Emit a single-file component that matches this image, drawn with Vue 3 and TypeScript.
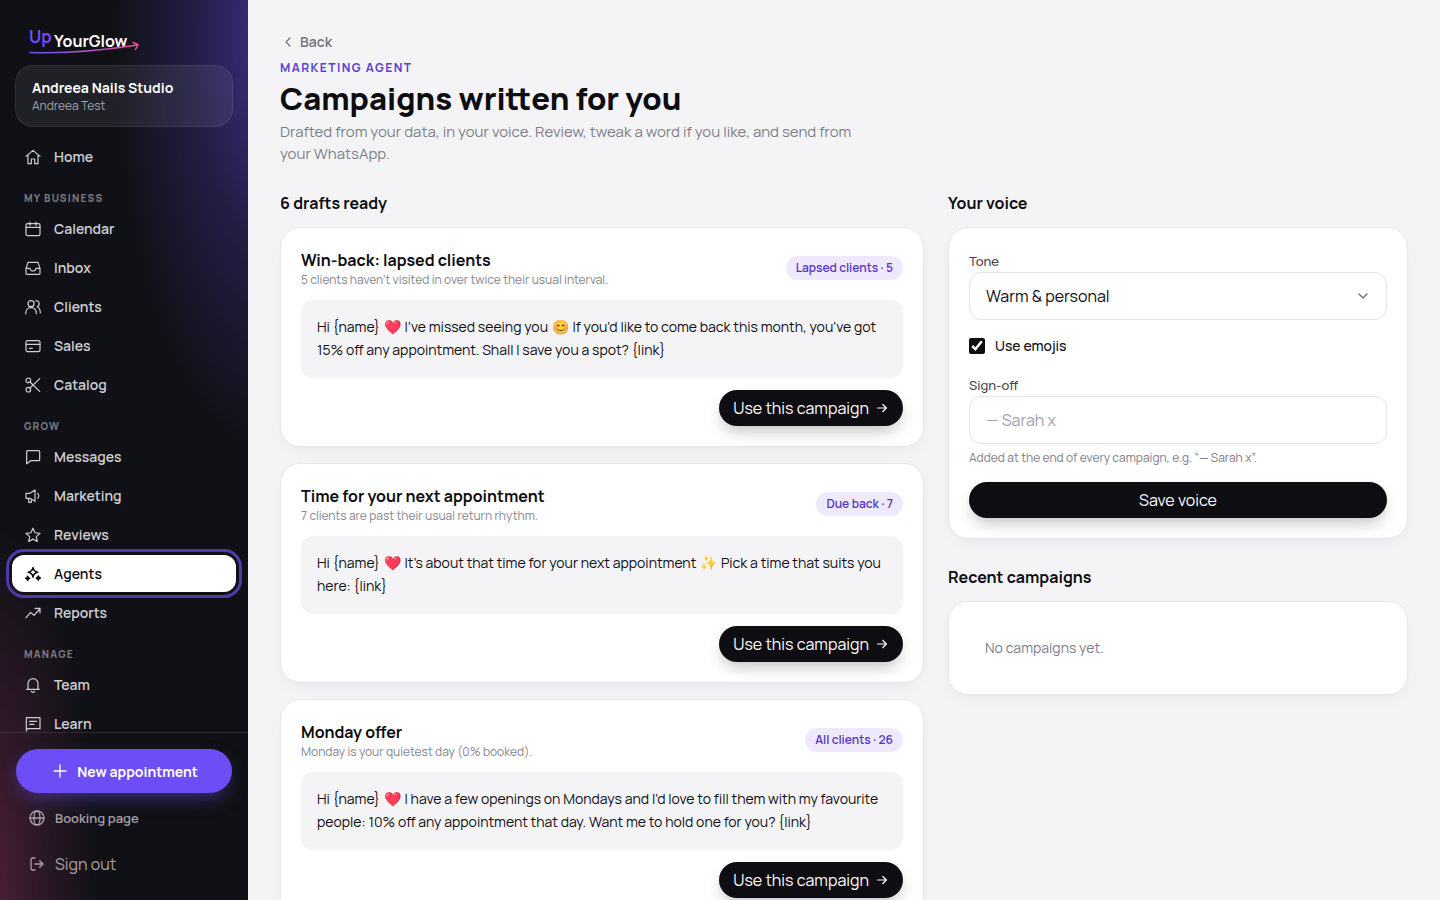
<script setup lang="ts">
import { ref } from 'vue'

interface NavItem {
  label: string
  icon: string
  active?: boolean
}
interface NavGroup {
  title: string
  items: NavItem[]
}
interface Draft {
  title: string
  reason: string
  audience: string
  message: string
}

const icons: Record<string, string> = {
  home: '<path d="M1.500 11 12 2l10.500 9M4.500 9v13h5v-7h5v7h5V9"/>',
  calendar: '<rect x="1.500" y="4" width="21" height="18" rx="2.500"/><path d="M1.500 9.500h21M7.500 1.500V6.500M16.500 1.500V6.500"/>',
  inbox: '<path d="M1.500 12.500 4.500 3.500h15l3 9V20a1.500 1.500 0 0 1-1.500 1.500H3A1.500 1.500 0 0 1 1.500 20zM1.500 12.500h6c.5 2.500 2.200 4 4.500 4s4-1.500 4.500-4h6"/>',
  clients: '<circle cx="9" cy="7" r="4.500"/><path d="M1 22c0-5.500 3-9 8-9s8 3.500 8 9M15.500 3c5.500-2 8 5.500 3 8.500 3 1.500 4.500 5 4.500 9.500"/>',
  sales: '<rect x="1.500" y="4" width="21" height="16.500" rx="2.500"/><path d="M1.500 9.500h21M6.500 15.500h4.500"/>',
  catalog: '<circle cx="5" cy="5" r="3.500"/><circle cx="5" cy="19" r="3.500"/><path d="M7.500 7.500 22 21.500M7.500 16.500 22 2.500"/>',
  messages: '<path d="M4 2.500h16.500A1.500 1.500 0 0 1 22 4v12a1.500 1.500 0 0 1-1.500 1.500H8.500L2.500 22V4A1.500 1.500 0 0 1 4 2.500z"/>',
  marketing: '<path d="M1.500 8h6l7.500-5v17l-7.500-4.500h-6zM5.500 15.500v6h4v-5M19 8c2.200 2 2.200 5.500 0 7.500"/>',
  reviews: '<path d="m12 1.800 3.100 6.800 7.400.9-5.500 5 1.500 7.300L12 18.200l-6.500 3.600L7 14.500l-5.500-5 7.400-.9z"/>',
  agents: '<path d="M12 2.500c.9 4.500 2.500 6 7 7-4.500 1-6.100 2.500-7 7-.9-4.500-2.500-6-7-7 4.500-1 6.100-2.500 7-7z"/><path d="M4 15.500c.4 2 1 2.700 3 3-2 .4-2.600 1-3 3-.4-2-1-2.600-3-3 2-.3 2.600-1 3-3zM20 15c.4 2 1 2.700 3 3-2 .4-2.600 1-3 3-.4-2-1-2.600-3-3 2-.3 2.600-1 3-3z" fill="currentColor"/>',
  reports: '<path d="M1.500 19 8.500 11l5 4.500 8.500-9.500M15 5h7.500v7"/>',
  team: '<path d="M2.500 18.500h19M4.500 18.500V10a7.500 7.500 0 0 1 15 0v8.500M9.500 21.500c1 2 4 2 5 0"/>',
  learn: '<path d="M2 22.500V2.500h20.500V19H5.500c-2.200 0-3.500 1.200-3.500 3.500M7 8h10.500M7 12.500h6.500"/>',
}

const groups: NavGroup[] = [
  { title: '', items: [{ label: 'Home', icon: 'home' }] },
  {
    title: 'My business',
    items: [
      { label: 'Calendar', icon: 'calendar' },
      { label: 'Inbox', icon: 'inbox' },
      { label: 'Clients', icon: 'clients' },
      { label: 'Sales', icon: 'sales' },
      { label: 'Catalog', icon: 'catalog' },
    ],
  },
  {
    title: 'Grow',
    items: [
      { label: 'Messages', icon: 'messages' },
      { label: 'Marketing', icon: 'marketing' },
      { label: 'Reviews', icon: 'reviews' },
      { label: 'Agents', icon: 'agents', active: true },
      { label: 'Reports', icon: 'reports' },
    ],
  },
  {
    title: 'Manage',
    items: [
      { label: 'Team', icon: 'team' },
      { label: 'Learn', icon: 'learn' },
    ],
  },
]

const drafts: Draft[] = [
  {
    title: 'Win-back: lapsed clients',
    reason: "5 clients haven't visited in over twice their usual interval.",
    audience: 'Lapsed clients · 5',
    message:
      "Hi {name} ❤️ I've missed seeing you 😊 If you'd like to come back this month, you've got 15% off any appointment. Shall I save you a spot? {link}",
  },
  {
    title: 'Time for your next appointment',
    reason: '7 clients are past their usual return rhythm.',
    audience: 'Due back · 7',
    message:
      "Hi {name} ❤️ It's about that time for your next appointment ✨ Pick a time that suits you here: {link}",
  },
  {
    title: 'Monday offer',
    reason: 'Monday is your quietest day (0% booked).',
    audience: 'All clients · 26',
    message:
      "Hi {name} ❤️ I have a few openings on Mondays and I'd love to fill them with my favourite people: 10% off any appointment that day. Want me to hold one for you? {link}",
  },
]

// Splits a message so that each emoji can be given its own spacing.
const messageParts = (message: string): string[] => message.split(/(❤️|😊|✨)/u)
const isEmoji = (part: string): boolean => /^(❤️|😊|✨)$/u.test(part)

const tone = ref('warm')
const useEmojis = ref(true)
const signOff = ref('')
</script>

<template>
  <div class="app">
    <aside class="sidebar">
      <svg class="logo" viewBox="0 0 112 28" role="img" aria-label="Up YourGlow">
        <defs>
          <linearGradient id="swoosh" gradientUnits="userSpaceOnUse" x1="0" y1="0" x2="110" y2="0">
            <stop offset="0" stop-color="#6d4df6" />
            <stop offset="0.5" stop-color="#a757cf" />
            <stop offset="1" stop-color="#f0478f" />
          </linearGradient>
        </defs>
        <text class="logo-up" x="0" y="16">Up</text>
        <text class="logo-name" x="25" y="20">YourGlow</text>
        <path d="M1 25.500C35 26.500 70 24 108.500 18M104 15.500l5 2-2.500 5" fill="none" stroke="url(#swoosh)" stroke-width="1.500" stroke-linecap="round" stroke-linejoin="round" />
      </svg>

      <div class="profile">
        <strong>Andreea Nails Studio</strong>
        <span>Andreea Test</span>
      </div>

      <nav class="nav" aria-label="Main">
        <template v-for="group in groups" :key="group.title">
          <h2 v-if="group.title" class="nav-title">{{ group.title }}</h2>
          <a v-for="item in group.items" :key="item.label" href="#" class="nav-item" :class="{ active: item.active }">
            <svg class="icon" viewBox="0 0 24 24" aria-hidden="true" v-html="icons[item.icon]"></svg>
            {{ item.label }}
          </a>
        </template>
      </nav>

      <div class="side-foot">
        <button type="button" class="new-btn">
          <svg class="icon" viewBox="0 0 24 24" aria-hidden="true"><path d="M12 3v18M3 12h18" /></svg>
          New appointment
        </button>
        <a href="#" class="booking">
          <svg class="icon" viewBox="0 0 24 24" aria-hidden="true"><circle cx="12" cy="12" r="10.500" /><ellipse cx="12" cy="12" rx="4.500" ry="10.500" /><path d="M1.500 12h21" /></svg>
          Booking page
        </a>
        <button type="button" class="signout">
          <svg class="icon" viewBox="0 0 24 24" aria-hidden="true"><path d="M9 3H5.500A2.500 2.500 0 0 0 3 5.500v13A2.500 2.500 0 0 0 5.500 21H9M9 12h12M16 7l5 5-5 5" /></svg>
          Sign out
        </button>
      </div>
    </aside>

    <main class="main">
      <header class="page-head">
        <a href="#" class="back">
          <svg class="icon" viewBox="0 0 16 16" aria-hidden="true"><path d="M10 4 6 8l4 4" /></svg>
          Back
        </a>
        <p class="eyebrow">Marketing agent</p>
        <h1>Campaigns written for you</h1>
        <p class="lead">Drafted from your data, in your voice. Review, tweak a word if you like, and send from your WhatsApp.</p>
      </header>

      <div class="columns">
        <section>
          <h2 class="section-title">6 drafts ready</h2>
          <div class="drafts">
            <article v-for="draft in drafts" :key="draft.title" class="card">
              <div class="draft-head">
                <div>
                  <h3>{{ draft.title }}</h3>
                  <p>{{ draft.reason }}</p>
                </div>
                <span class="badge">{{ draft.audience }}</span>
              </div>
              <p class="message"><template v-for="(part, i) in messageParts(draft.message)" :key="i"><span v-if="isEmoji(part)" class="emoji">{{ part }}</span><template v-else>{{ part }}</template></template></p>
              <div class="draft-actions">
                <button type="button" class="btn">
                  Use this campaign
                  <svg class="icon" viewBox="0 0 16 16" aria-hidden="true"><path d="M3 8h10M9 4l4 4-4 4" /></svg>
                </button>
              </div>
            </article>
          </div>
        </section>

        <div class="side">
          <section>
            <h2 class="section-title">Your voice</h2>
            <form class="card" @submit.prevent>
              <label class="field-label" for="tone">Tone</label>
              <div class="select-wrap">
                <select id="tone" v-model="tone" class="control">
                  <option value="warm">Warm &amp; personal</option>
                </select>
                <svg class="icon chevron" viewBox="0 0 16 16" aria-hidden="true"><path d="m4 6 4 4 4-4" /></svg>
              </div>
              <label class="check">
                <input v-model="useEmojis" type="checkbox" />
                Use emojis
              </label>
              <label class="field-label" for="signoff">Sign-off</label>
              <input id="signoff" v-model="signOff" class="control" type="text" placeholder="— Sarah x" />
              <p class="hint">Added at the end of every campaign, e.g. “— Sarah x”.</p>
              <button type="submit" class="btn wide">Save voice</button>
            </form>
          </section>
          <section>
            <h2 class="section-title">Recent campaigns</h2>
            <div class="card empty">No campaigns yet.</div>
          </section>
        </div>
      </div>
    </main>
  </div>
</template>

<style>
body {
  background: #f4f4f7;
}
</style>

<style scoped>
* {
  box-sizing: border-box;
}
.app {
  display: flex;
  height: 100vh;
  font-family: Manrope, Inter, "Noto Sans", sans-serif;
  color: #0e0d12;
  background: #f4f4f7;
}
h1, h2, h3, p {
  margin: 0;
}
a {
  text-decoration: none;
}
button, input, select {
  font-family: inherit;
}
button {
  border: 0;
  cursor: pointer;
}
.icon {
  width: 16px;
  height: 16px;
  flex: none;
  fill: none;
  stroke: currentColor;
  stroke-width: 2;
  stroke-linecap: round;
  stroke-linejoin: round;
}

.sidebar {
  display: flex;
  flex-direction: column;
  flex: none;
  width: 248px;
  background:
    radial-gradient(160px 420px at 110% 4%, rgba(109, 77, 246, 0.5), rgba(109, 77, 246, 0.2) 52%, transparent),
    radial-gradient(120px 380px at -8% 100%, rgba(236, 72, 153, 0.3), rgba(236, 72, 153, 0.13) 52%, transparent),
    #101116;
  color: #fff;
}
.logo {
  width: 112px;
  height: 28px;
  margin: 27px 0 10px 29px;
  flex: none;
  overflow: visible;
}
.logo-up {
  fill: #6d4df6;
  font-size: 17px;
  font-weight: 700;
}
.logo-name {
  fill: #fff;
  font-size: 16px;
  font-weight: 700;
}
.profile {
  display: flex;
  flex-direction: column;
  margin: 0 15px;
  padding: 13px 16px 11px;
  border: 1px solid rgba(255, 255, 255, 0.08);
  border-radius: 18px;
  background: rgba(255, 255, 255, 0.07);
}
.profile strong {
  font-size: 14px;
  line-height: 18px;
}
.profile span {
  font-size: 12px;
  line-height: 18px;
  color: #a3a3ab;
}
.nav {
  display: flex;
  flex-direction: column;
  flex: 1;
  min-height: 0;
  gap: 2px;
  padding: 11px 12px 0;
  overflow: hidden;
}
.nav-title {
  flex: none;
  padding: 15px 12px 3px;
  font-size: 10px;
  line-height: 13px;
  font-weight: 800;
  letter-spacing: 0.12em;
  text-transform: uppercase;
  color: #77777f;
}
.nav-item {
  display: flex;
  align-items: center;
  flex: none;
  gap: 13px;
  height: 37px;
  padding: 0 13px;
  border-radius: 12px;
  font-size: 14px;
  font-weight: 600;
  color: #cfcfd3;
}
.nav-item.active {
  background: #fff;
  color: #0e0d12;
  outline: 3px solid #4f3aa8;
  outline-offset: 3px;
}
.nav-item .icon {
  stroke-width: 1.8;
}
.nav-item.active .icon {
  stroke-width: 2.4;
}
.side-foot {
  display: flex;
  flex-direction: column;
  gap: 6px;
  padding: 16px 16px 15px;
  border-top: 1px solid rgba(255, 255, 255, 0.1);
}
.new-btn {
  display: flex;
  align-items: center;
  justify-content: center;
  gap: 9px;
  height: 44px;
  padding: 0 5px 0 7px;
  border-radius: 22px;
  background: #6d4df6;
  color: #fff;
  font-size: 14px;
  font-weight: 700;
  box-shadow: 0 8px 20px -6px rgba(109, 77, 246, 0.6);
}
.booking, .signout {
  display: flex;
  align-items: center;
  gap: 10px;
  padding: 0 13px;
  background: none;
  color: #a6a2ab;
}
.booking {
  height: 38px;
  font-size: 13px;
  font-weight: 600;
}
.signout {
  height: 42px;
  font-size: 16px;
}

.main {
  flex: 1;
  min-width: 0;
  padding: 32px 32px 48px;
  overflow-y: auto;
  scrollbar-width: none;
}
.page-head {
  margin-bottom: 26px;
}
.back {
  display: flex;
  align-items: center;
  gap: 4px;
  width: max-content;
  font-size: 14px;
  line-height: 20px;
  font-weight: 600;
  color: #73737c;
}
.back .icon {
  stroke-width: 1.3;
}
.eyebrow {
  margin-top: 6px;
  font-size: 12px;
  line-height: 20px;
  font-weight: 700;
  letter-spacing: 0.12em;
  text-transform: uppercase;
  color: #5b3fd0;
}
h1 {
  font-size: 31px;
  line-height: 40px;
  font-weight: 800;
}
.lead {
  max-width: 580px;
  margin-top: 3px;
  font-size: 15px;
  line-height: 22px;
  color: #7e7e87;
}
.columns {
  display: grid;
  grid-template-columns: minmax(0, 7fr) minmax(0, 5fr);
  gap: 24px;
  align-items: start;
}
.drafts {
  display: flex;
  flex-direction: column;
  gap: 16px;
}
.side {
  display: flex;
  flex-direction: column;
  gap: 26px;
}
.section-title {
  margin-bottom: 12px;
  font-size: 16px;
  line-height: 24px;
  font-weight: 700;
}
.card {
  padding: 20px;
  border: 1px solid #e7e7ee;
  border-radius: 20px;
  background: #fff;
  box-shadow: 0 6px 16px -4px rgba(20, 18, 40, 0.06);
}
.draft-head {
  display: flex;
  align-items: center;
  justify-content: space-between;
  gap: 16px;
}
.draft-head h3 {
  font-size: 16px;
  line-height: 24px;
  font-weight: 700;
}
.draft-head p {
  font-size: 12px;
  line-height: 16px;
  color: #85858e;
}
.badge {
  flex: none;
  padding: 0 10px;
  border-radius: 12px;
  background: #efe9fe;
  color: #5436c4;
  font-size: 12px;
  line-height: 24px;
  font-weight: 600;
}
.message {
  margin: 12px 0;
  padding: 15px 16px 17px;
  border-radius: 12px;
  background: #f4f4f7;
  font-size: 14px;
  line-height: 23px;
}
.emoji {
  margin: 0 1px;
  filter: hue-rotate(-14deg);
}
.draft-actions {
  display: flex;
  justify-content: flex-end;
}
.btn {
  display: flex;
  align-items: center;
  justify-content: center;
  gap: 6px;
  height: 36px;
  padding: 0 14px;
  border-radius: 18px;
  background: #0e0d12;
  color: #fff;
  font-size: 16px;
  box-shadow: 0 8px 16px -4px rgba(14, 13, 18, 0.28);
}
.btn .icon {
  width: 14px;
  height: 14px;
  stroke-width: 1.4;
}
.wide {
  width: 100%;
}
.field-label {
  display: block;
  padding-top: 2px;
  font-size: 13px;
  line-height: 22px;
  font-weight: 500;
  color: #45454d;
}
.select-wrap {
  position: relative;
}
.control {
  display: block;
  width: 100%;
  height: 48px;
  padding: 0 16px;
  border: 1px solid #e5e5ea;
  border-radius: 12px;
  background: #fff;
  color: #0e0d12;
  font-size: 16px;
  appearance: none;
}
.control::placeholder {
  color: #a2a2aa;
}
.chevron {
  position: absolute;
  top: 16px;
  right: 16px;
  color: #73737c;
  stroke-width: 1.5;
  pointer-events: none;
}
.check {
  display: flex;
  align-items: center;
  gap: 10px;
  margin: 16px 0;
  font-size: 14px;
  line-height: 20px;
  font-weight: 500;
}
.check input {
  width: 16px;
  height: 16px;
  margin: 0;
  accent-color: #0e0d12;
}
.hint {
  margin: 4px 0 14px;
  font-size: 12px;
  line-height: 20px;
  color: #7e7e87;
}
.empty {
  padding: 36px;
  font-size: 14px;
  line-height: 20px;
  color: #7e7e87;
}
</style>
